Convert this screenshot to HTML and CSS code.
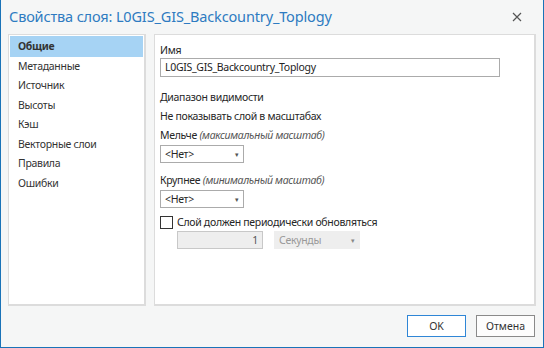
FILE: index.html
```html
<!DOCTYPE html>
<html lang="ru">
<head>
<meta charset="utf-8">
<link rel="stylesheet" href="styles.css">
</head>
<body>
<div class="dialog">
  <div class="titlebar">
    <div class="title">Свойства слоя: L0GIS_GIS_Backcountry_Toplogy</div>
    <div class="close">
      <svg width="10" height="10" viewBox="0 0 10 10"><path d="M1 1L9 9M9 1L1 9" stroke="#555" stroke-width="1.2"/></svg>
    </div>
  </div>
  <div class="body">
    <ul class="nav">
      <li class="active">Общие</li>
      <li>Метаданные</li>
      <li>Источник</li>
      <li>Высоты</li>
      <li>Кэш</li>
      <li>Векторные слои</li>
      <li>Правила</li>
      <li>Ошибки</li>
    </ul>
    <div class="content">
      <div class="label">Имя</div>
      <div class="textbox">L0GIS_GIS_Backcountry_Toplogy</div>
      <div class="text section">Диапазон видимости</div>
      <div class="text row">Не показывать слой в масштабах</div>
      <div class="text row">Мельче <i>(максимальный масштаб)</i></div>
      <div class="select"><span>&lt;Нет&gt;</span><span class="arrow">&#9662;</span></div>
      <div class="text row2">Крупнее <i>(минимальный масштаб)</i></div>
      <div class="select"><span>&lt;Нет&gt;</span><span class="arrow">&#9662;</span></div>
      <label class="check"><span class="box"></span>Слой должен периодически обновляться</label>
      <div class="refresh">
        <div class="num">1</div>
        <div class="select disabled"><span>Секунды</span><span class="arrow">&#9662;</span></div>
      </div>
    </div>
  </div>
  <div class="footer">
    <button class="btn primary">OK</button>
    <button class="btn">Отмена</button>
  </div>
</div>
</body>
</html>
```
FILE: styles.css
```css
* { box-sizing: border-box; }
html, body { margin: 0; padding: 0; }
body {
  width: 544px;
  height: 348px;
  font-family: "Noto Sans", "Open Sans", sans-serif;
  font-size: 10.5px;
  letter-spacing: -0.3px;
  color: #262626;
}
.dialog {
  width: 544px;
  height: 348px;
  background: #f5f6f6;
  border: 1px solid #1a73b8;
  border-top: none;
  display: flex;
  flex-direction: column;
}
.titlebar {
  height: 34px;
  display: flex;
  align-items: center;
  justify-content: space-between;
  padding: 0 21px 2px 8px;
}
.title {
  font-size: 14.5px;
  color: #2e7bc1;
  letter-spacing: -0.15px;
}
.close { display: flex; margin-top: 2px; }
.body {
  display: flex;
  gap: 8px;
  padding: 0 7px 0 7px;
  height: 272px;
}
.nav {
  list-style: none;
  margin: 0;
  padding: 1px;
  width: 138px;
  background: #fff;
  border: 1px solid #dcdcdc;
  border-right-width: 2px;
  border-bottom-width: 2px;
}
.nav li {
  height: 19.5px;
  line-height: 19.5px;
  padding-left: 8px;
  color: #333;
}
.nav li.active {
  background: #a6d3f4;
  font-weight: bold;
  height: 20.5px;
  line-height: 20.5px;
}
.content {
  flex: 1;
  background: #fff;
  border: 1px solid #dcdcdc;
  border-right-width: 2px;
  border-bottom-width: 2px;
  padding: 8px 6px 0 5px;
}
.label { line-height: 14px; height: 15px; }
.textbox {
  width: 340px;
  height: 19px;
  border: 1px solid #ababab;
  line-height: 17px;
  padding-left: 4px;
  color: #222;
}
.text { line-height: 14px; }
.section { margin-top: 13px; }
.row { margin-top: 5px; }
.row2 { margin-top: 10px; }
i { color: #555; }
.select {
  margin-top: 3px;
  width: 84px;
  height: 18px;
  border: 1px solid #ababab;
  background: #fff;
  display: flex;
  align-items: center;
  justify-content: space-between;
  padding: 0 4px 0 4px;
}
.arrow { font-size: 7px; color: #555; }
.check {
  display: flex;
  align-items: center;
  gap: 4px;
  margin-top: 7px;
  height: 14px;
}
.box {
  width: 13px;
  height: 13px;
  border: 1px solid #333;
  background: #fff;
}
.refresh {
  display: flex;
  gap: 11px;
  margin-top: 2px;
  padding-left: 17px;
}
.num {
  width: 86px;
  height: 18px;
  border: 1px solid #c8c8c8;
  background: #eeeeee;
  text-align: right;
  padding-right: 4px;
  line-height: 16px;
  color: #555;
}
.select.disabled {
  margin-top: 0;
  width: 86px;
  background: #eeeeee;
  border-color: #eeeeee;
  color: #999;
}
.select.disabled .arrow { color: #888; }
.footer {
  flex: 1;
  display: flex;
  justify-content: flex-end;
  align-items: center;
  gap: 10px;
  padding: 0 8px 2px 0;
}
.btn {
  width: 59px;
  height: 22px;
  background: #fdfdfd;
  border: 1px solid #8a8a8a;
  font-family: "Noto Sans", sans-serif;
  font-size: 10.5px;
  color: #333;
  padding: 0;
}
.btn.primary {
  border: 1px solid #2f86d6;
  background: #fff;
}
```
